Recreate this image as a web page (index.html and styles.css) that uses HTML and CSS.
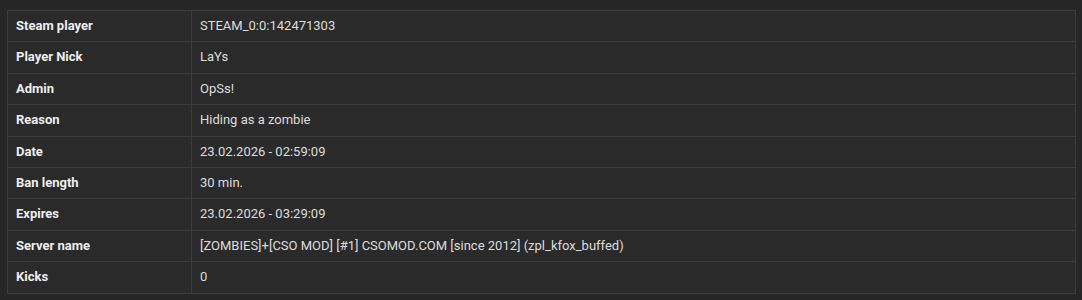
FILE: index.html
```html
<!DOCTYPE html>
<html lang="en">
<head>
<meta charset="utf-8">
<title>Ban details</title>
<link rel="stylesheet" href="styles.css">
</head>
<body>
<div class="wrap">
<table class="details">
<tbody>
<tr><th>Steam player</th><td>STEAM_0:0:142471303</td></tr>
<tr><th>Player Nick</th><td>LaYs</td></tr>
<tr><th>Admin</th><td>OpSs!</td></tr>
<tr><th>Reason</th><td>Hiding as a zombie</td></tr>
<tr><th>Date</th><td>23.02.2026 - 02:59:09</td></tr>
<tr><th>Ban length</th><td>30 min.</td></tr>
<tr><th>Expires</th><td>23.02.2026 - 03:29:09</td></tr>
<tr><th>Server name</th><td>[ZOMBIES]+[CSO MOD] [#1] CSOMOD.COM [since 2012] (zpl_kfox_buffed)</td></tr>
<tr><th>Kicks</th><td>0</td></tr>
</tbody>
</table>
</div>
</body>
</html>
```

FILE: styles.css
```css
html, body {
  margin: 0;
  padding: 0;
  background: #262626;
}
body {
  font-family: Roboto, "Liberation Sans", Arial, sans-serif;
  font-size: 13px;
  line-height: 14.4px;
  color: #dddddd;
}
.wrap {
  padding: 10px 6px 0 7px;
}
.details {
  width: 100%;
  border-collapse: collapse;
  background: #2a2a2a;
  border: 1px solid #3c3c3c;
}
.details th,
.details td {
  border: 1px solid #3c3c3c;
  padding: 8px 8px;
  text-align: left;
  vertical-align: middle;
}
.details th {
  width: 167px;
  font-weight: 700;
  color: #eeeeee;
}
.details td {
  font-weight: 400;
  color: #dddddd;
}
```
